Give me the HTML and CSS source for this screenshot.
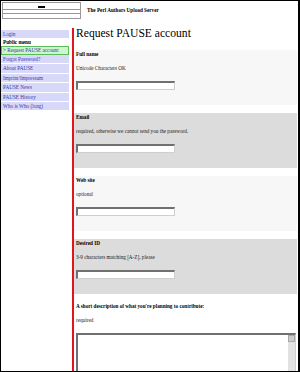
FILE: index.html
```html
<!DOCTYPE html>
<html lang="en">
<head>
<meta charset="UTF-8">
<title>PAUSE: Request PAUSE account</title>
<link rel="stylesheet" href="styles.css">
</head>
<body>

<div class="frame">
    <div class="header">
        <div class="logo">
            <div class="logo-band top"><span class="logo-mark"></span></div>
            <div class="logo-band mid"></div>
            <div class="logo-band low"></div>
        </div>
        <div class="site-title">The Perl Authors Upload Server</div>
    </div>

    <div class="layout">
        <div class="menu">
            <a class="menu-item" href="#">Login</a>
            <div class="menu-head">Public menu</div>
            <a class="menu-item active" href="#">&gt; Request PAUSE account</a>
            <a class="menu-item" href="#">Forgot Password?</a>
            <a class="menu-item" href="#">About PAUSE</a>
            <a class="menu-item" href="#">Imprint/Impressum</a>
            <a class="menu-item" href="#">PAUSE News</a>
            <a class="menu-item" href="#">PAUSE History</a>
            <a class="menu-item" href="#">Who is Who (long)</a>
        </div>

        <div class="main">
            <h1>Request PAUSE account</h1>

            <div class="field light">
                <div class="label">Full name</div>
                <div class="hint">Unicode Characters OK</div>
                <input type="text" class="text-input">
            </div>

            <div class="field dark">
                <div class="label">Email</div>
                <div class="hint">required, otherwise we cannot send you the password.</div>
                <input type="text" class="text-input">
            </div>

            <div class="field light">
                <div class="label">Web site</div>
                <div class="hint">optional</div>
                <input type="text" class="text-input">
            </div>

            <div class="field dark">
                <div class="label">Desired ID</div>
                <div class="hint">3-9 characters matching [A-Z], please</div>
                <input type="text" class="text-input">
            </div>

            <div class="field">
                <div class="label">A short description of what you're planning to contribute:</div>
                <div class="hint">required</div>
                <div class="area-box">
                    <textarea class="text-area"></textarea>
                    <div class="scroll-bar"><span class="scroll-up"></span></div>
                </div>
            </div>
        </div>
    </div>
</div>

</body>
</html>
```

FILE: styles.css
```css
body {
    margin: 0;
    background: #fff;
    color: #000;
    font-family: "Liberation Serif", "Times New Roman", serif;
    font-size: 5.2px;
}
.frame {
    box-sizing: border-box;
    width: 300px;
    height: 372px;
    border: 1px solid #000;
    border-right-width: 2px;
    display: flex;
    flex-direction: column;
    overflow: hidden;
}
.header {
    display: flex;
    align-items: flex-start;
    height: 27px;
    flex: none;
}
.logo {
    box-sizing: border-box;
    width: 79px;
    height: 17px;
    margin: 1px 0 0 1px;
    border: 1px solid #999;
    border-bottom: none;
}
.logo-band {
    border-bottom: 1px solid #999;
    display: flex;
    justify-content: center;
}
.logo-band.top {
    height: 6px;
    align-items: flex-end;
}
.logo-band.mid {
    height: 3px;
}
.logo-band.low {
    height: 4px;
}
.logo-mark {
    width: 7px;
    height: 2px;
    margin-bottom: 1px;
    background: #000;
}
.site-title {
    margin: 6px 0 0 6px;
    line-height: 7px;
    font-weight: bold;
}
.layout {
    flex: 1;
    display: flex;
    min-height: 0;
}
.menu {
    width: 68px;
    flex: none;
    padding-top: 2px;
}
.menu-item, .menu-head {
    display: block;
    padding-left: 2px;
    line-height: 8px;
    white-space: nowrap;
}
.menu-item {
    background: #d8d8f8;
    color: #3a3aa8;
    text-decoration: none;
}
.menu-head {
    font-weight: bold;
}
.menu-item.active {
    background: #ccf6cc;
    border: 1px solid #5cbc5c;
    padding-left: 1px;
    line-height: 7px;
}
.menu-item.active ~ .menu-item {
    line-height: 8.4px;
    margin-bottom: 1px;
}
.main {
    flex: 1;
    margin-left: 3px;
    border-left: 2px solid #e0161c;
    padding-right: 1px;
    min-width: 0;
}
h1 {
    margin: 0 0 10px;
    padding-left: 2px;
    font-size: 11.6px;
    line-height: 12px;
    font-weight: normal;
}
.field {
    height: 55px;
    box-sizing: border-box;
    padding: 1px 1px 0 2px;
    margin-bottom: 8px;
}
.field.light {
    background: #f7f7f7;
}
.field.dark {
    background: #dcdcdc;
}
.label {
    font-weight: bold;
    line-height: 7px;
}
.hint {
    margin: 7px 0 9px;
    line-height: 7px;
    color: #222;
}
.text-input {
    display: block;
    box-sizing: border-box;
    width: 99px;
    height: 9px;
    margin: 0;
    padding: 0;
    background: #fff;
    border-style: solid;
    border-width: 2px 1px 1px 2px;
    border-color: #707070 #cfcfcf #cfcfcf #707070;
}
.area-box {
    display: flex;
    height: 80px;
    box-sizing: border-box;
    border-style: solid;
    border-width: 2px 1px 1px 2px;
    border-color: #707070 #cfcfcf #cfcfcf #707070;
    background: #fff;
}
.text-area {
    flex: 1;
    margin: 0;
    padding: 0;
    border: none;
    background: transparent;
    resize: none;
    outline: none;
}
.scroll-bar {
    width: 7px;
    flex: none;
    background: #e2e2e2;
}
.scroll-up {
    display: block;
    box-sizing: border-box;
    height: 7px;
    border: 1px solid #a8a8a8;
    background: #cdcdcd;
}
```
